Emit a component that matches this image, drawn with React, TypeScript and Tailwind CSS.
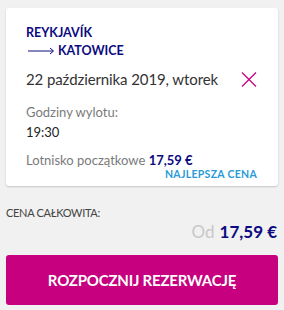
import React from "react";

export default function App() {
  return (
    <div
      className="w-[284px] h-[310px] bg-[#f1f1f1] px-[6px] pt-[8px] overflow-hidden"
      style={{ fontFamily: "Lato, 'Open Sans', sans-serif" }}
    >
      <div className="bg-white rounded-[3px] shadow-[0_1px_2px_rgba(0,0,0,0.18)] h-[178px] pl-[20px] pr-[21px] pt-[16px]">
        <div className="text-[12.5px] leading-[18px] font-bold text-[#0b0a7e]">REYKJAVÍK</div>
        <div className="flex items-center text-[12.5px] leading-[18px] font-bold text-[#0b0a7e]">
          <svg width="27" height="8" viewBox="0 0 27 8" className="ml-[2px] mr-[3px]">
            <line x1="0" y1="4" x2="25" y2="4" stroke="#0b0a7e" strokeWidth="1" />
            <path d="M22 1 L25.5 4 L22 7" fill="none" stroke="#0b0a7e" strokeWidth="1" />
          </svg>
          <span>KATOWICE</span>
        </div>
        <div className="mt-[7px] flex items-center justify-between">
          <span className="text-[15px] leading-[24px] tracking-[-0.1px] text-[#333333]">22 października 2019, wtorek</span>
          <svg width="16" height="15" viewBox="0 0 16 15">
            <line x1="1" y1="0.5" x2="15" y2="14.5" stroke="#c6007e" strokeWidth="1.3" />
            <line x1="15" y1="0.5" x2="1" y2="14.5" stroke="#c6007e" strokeWidth="1.3" />
          </svg>
        </div>
        <div className="mt-[11px] text-[13px] leading-[20px] text-[#7a7a7a]">Godziny wylotu:</div>
        <div className="text-[13px] leading-[20px] text-[#222222]">19:30</div>
        <div className="mt-[10px] text-[13px] leading-[16px] text-[#7a7a7a]">
          Lotnisko początkowe <span className="font-bold text-[#0b0a7e]">17,59 €</span>
        </div>
        <div className="text-right text-[10.5px] leading-[12px] font-bold tracking-[0.3px] text-[#2a9ad8]">
          NAJLEPSZA CENA
        </div>
      </div>
      <div className="mt-[19px] text-[11px] leading-[16px] tracking-[-0.3px] text-[#444444]">CENA CAŁKOWITA:</div>
      <div className="flex justify-end items-baseline pr-[1px]">
        <span className="text-[17px] leading-[22px] text-[#c8c8c8] mr-[5px]">Od</span>
        <span className="text-[17px] leading-[22px] font-bold text-[#0b0a7e]">17,59 €</span>
      </div>
      <button className="mt-[12px] w-full h-[50px] rounded-[3px] bg-[#c6007e] text-white text-[15px] tracking-[-0.2px] font-bold flex items-center justify-center">
        ROZPOCZNIJ REZERWACJĘ
      </button>
    </div>
  );
}
